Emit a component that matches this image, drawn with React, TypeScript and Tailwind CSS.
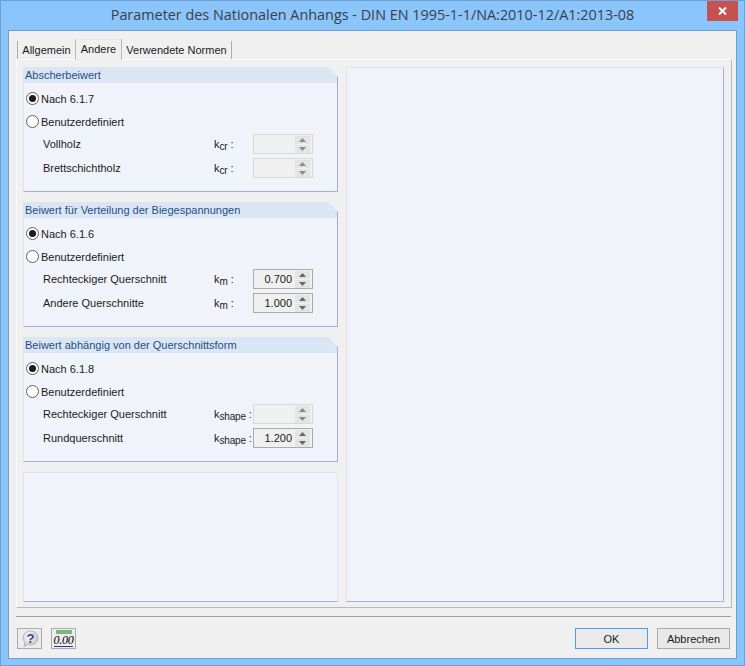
import React from "react";

const FONT = "font-['Liberation_Sans',sans-serif]";

function Radio({ checked, label }: { checked?: boolean; label: string }) {
  return (
    <div className="flex h-[23px] items-center pl-[2px]">
      <span className="flex h-[13px] w-[13px] items-center justify-center rounded-full border border-[#5f5f5f] bg-white">
        {checked && <span className="h-[7px] w-[7px] rounded-full bg-[#1c1c1c]" />}
      </span>
      <span className="ml-[2px] text-[#1a1a1a]">{label}</span>
    </div>
  );
}

function Arrow({ up, disabled }: { up?: boolean; disabled?: boolean }) {
  return (
    <span className="flex h-[8px] w-[15px] items-center justify-center bg-[#e4e4e4]">
      <svg width="7" height="4" viewBox="0 0 7 4">
        <path d={up ? "M3.5 0 7 4H0Z" : "M0 0H7L3.5 4Z"} fill={disabled ? "#8a8a8a" : "#666"} />
      </svg>
    </span>
  );
}

function Spinner({ value }: { value?: string }) {
  const disabled = !value;
  return (
    <div
      className={`flex h-[20px] w-[60px] items-center border bg-[#f0f0f0] ${
        disabled ? "border-[#d9d9d9]" : "border-[#ababab]"
      }`}
    >
      <span className="flex-1 pr-[3px] text-right text-[#1a1a1a]">{value}</span>
      <span className="mr-[2px] flex flex-col gap-[1px]">
        <Arrow up disabled={disabled} />
        <Arrow disabled={disabled} />
      </span>
    </div>
  );
}

function Row({ label, sub, value }: { label: string; sub: string; value?: string }) {
  return (
    <div className="flex h-[24px] items-center pl-[19px]">
      <span className="w-[171px] text-[#1a1a1a]">{label}</span>
      <span className="w-[39px] whitespace-nowrap text-[#1a1a1a]">
        k
        <span className="relative top-[2px] text-[10px] tracking-[-0.2px]">{sub}</span>
        <span className="ml-[3px]">:</span>
      </span>
      <Spinner value={value} />
    </div>
  );
}

function Group({
  title,
  nach,
  rows,
}: {
  title: string;
  nach: string;
  rows: { label: string; sub: string; value?: string }[];
}) {
  return (
    <section className="h-[125px] border-r border-b border-l border-r-[#a9a9e2] border-b-[#a9a9e2] border-l-[#dfe3f2] bg-[#f0f4fa] [clip-path:polygon(0_0,calc(100%-10px)_0,100%_10px,100%_100%,0_100%)]">
      <h3 className="h-[16px] bg-[#dbe6f5] pl-[1px] text-[11px] leading-[16px] font-normal text-[#1d4f84]">
        {title}
      </h3>
      <div className="pt-[4px]">
        <Radio checked label={nach} />
        <Radio label="Benutzerdefiniert" />
        <div className="-mt-[1px]">
          {rows.map((r) => (
            <Row key={r.label} {...r} />
          ))}
        </div>
      </div>
    </section>
  );
}

function HelpIcon() {
  return (
    <svg width="20" height="18" viewBox="0 0 20 18">
      <defs>
        <radialGradient id="hb" cx="40%" cy="35%" r="70%">
          <stop offset="0" stopColor="#ffffff" />
          <stop offset="1" stopColor="#bdbdbd" />
        </radialGradient>
      </defs>
      <path d="M10.500 1a7.500 7 0 1 1-3 13.400L4 17l.8-4.500A7.500 7 0 0 1 10.500 1Z" fill="url(#hb)" stroke="#b8b8b8" />
      <text x="10.500" y="13" textAnchor="middle" fontSize="13" fontWeight="700" fill="#2b3f95" fontFamily="Liberation Sans">?</text>
    </svg>
  );
}

function CalcIcon() {
  return (
    <div className="flex w-[16px] flex-col items-center">
      <span className="h-[4px] w-[16px] bg-[#79b779]" />
      <span className="mt-[1px] border-b border-[#3b2f8f] font-['Liberation_Serif',serif] text-[12px] leading-[11px] italic tracking-[-0.3px] text-black">
        0.00
      </span>
    </div>
  );
}

export default function App() {
  return (
    <div
      className={`relative flex h-[666px] w-[745px] flex-col border border-[#6f9fd2] bg-[#8ac5fb] text-[11px] leading-[16px] ${FONT}`}
    >
      <header className="flex h-[29px] items-center justify-center pb-[2px] font-['Open_Sans',sans-serif] text-[14.4px] text-[#3b4048]">
        Parameter des Nationalen Anhangs - DIN EN 1995-1-1/NA:2010-12/A1:2013-08
      </header>
      <button className="absolute top-0 right-[6px] flex h-[20px] w-[31px] items-center justify-center bg-[#c75050]">
        <svg width="9" height="8" viewBox="0 0 9 8">
          <path d="M1 0.500 8 7.500M8 0.500 1 7.500" stroke="#fff" strokeWidth="2" />
        </svg>
      </button>

      <main className="mx-[7px] flex h-[629px] flex-col border border-[#6f9fd2] bg-[#f0f0f0] px-[7px] pt-[8px]">
        <nav className="flex h-[20px] items-end pl-[1px] text-[#1a1a1a]">
          <span className="flex h-[18px] w-[58px] items-center justify-center border-l border-[#ababab]">Allgemein</span>
          <span className="z-10 mb-[-1px] flex h-[21px] w-[47px] items-center justify-center border-x border-t border-x-[#b9b9b9] border-t-[#e4e4e4] bg-[#f0f0f0] pb-[2px]">
            Andere
          </span>
          <span className="flex h-[18px] w-[110px] items-center justify-center border-r border-[#ababab]">Verwendete Normen</span>
        </nav>

        <div className="mr-[-3px] flex h-[549px] gap-[8px] border border-t-white border-r-[#b9b9b9] border-b-[#b9b9b9] border-l-[#fafafa] pt-[7px] pr-[7px] pb-[5px] pl-[6px]">
          <div className="flex w-[315px] flex-col gap-[10px]">
            <Group
              title="Abscherbeiwert"
              nach="Nach 6.1.7"
              rows={[
                { label: "Vollholz", sub: "cr" },
                { label: "Brettschichtholz", sub: "cr" },
              ]}
            />
            <Group
              title="Beiwert für Verteilung der Biegespannungen"
              nach="Nach 6.1.6"
              rows={[
                { label: "Rechteckiger Querschnitt", sub: "m", value: "0.700" },
                { label: "Andere Querschnitte", sub: "m", value: "1.000" },
              ]}
            />
            <Group
              title="Beiwert abhängig von der Querschnittsform"
              nach="Nach 6.1.8"
              rows={[
                { label: "Rechteckiger Querschnitt", sub: "shape" },
                { label: "Rundquerschnitt", sub: "shape", value: "1.200" },
              ]}
            />
            <div className="flex-1 border border-[#dfe3f2] border-b-[#a9a9e2] bg-[#f0f4fa]" />
          </div>
          <div className="flex-1 border border-[#dfe3f2] border-r-[#a9a9e2] border-b-[#a9a9e2] bg-[#f0f4fa]" />
        </div>

        <div className="mt-[8px] mr-[-2px] h-0 border-t border-[#a0a0a0]" />

        <footer className="mt-[11px] flex h-[21px] items-center">
          <button className="ml-[1px] flex h-[21px] w-[25px] items-center justify-center border border-[#ababab] bg-[#ececec]">
            <HelpIcon />
          </button>
          <button className="ml-[9px] flex h-[21px] w-[25px] items-center justify-center border border-[#ababab] bg-[#ececec]">
            <CalcIcon />
          </button>
          <button className="ml-auto flex h-[21px] w-[73px] items-center justify-center border border-[#4a9cf0] bg-[#eaeaea] text-[#1a1a1a]">
            OK
          </button>
          <button className="mr-[-1px] ml-[9px] flex h-[21px] w-[73px] items-center justify-center border border-[#ababab] bg-[#e8e8e8] text-[#1a1a1a]">
            Abbrechen
          </button>
        </footer>
      </main>
    </div>
  );
}
